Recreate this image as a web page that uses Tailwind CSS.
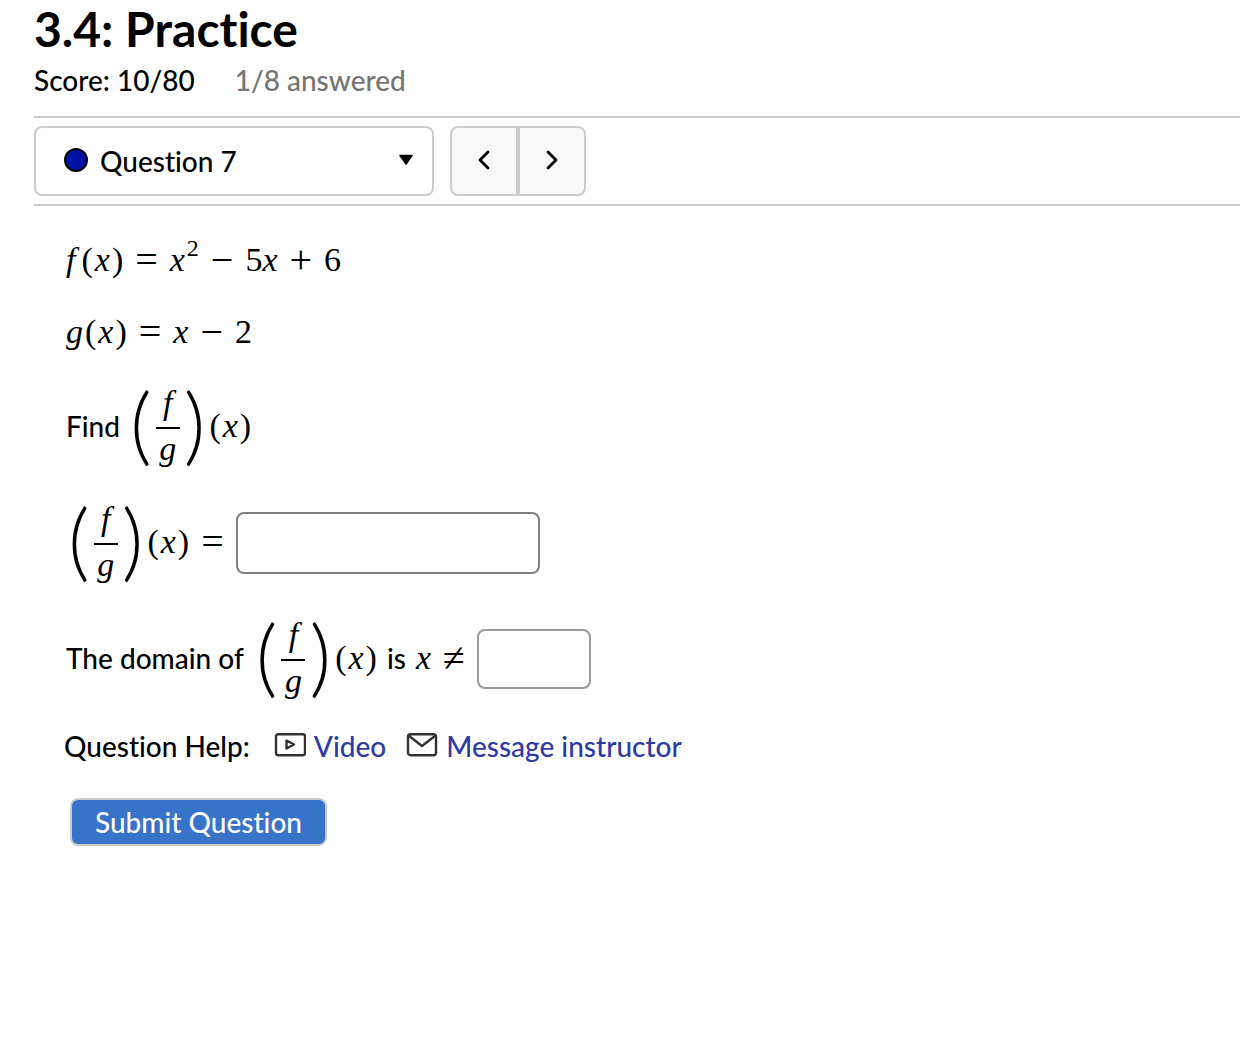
<!DOCTYPE html>
<html lang="en">
  <head>
    <meta charset="UTF-8" />
    <meta name="viewport" content="width=device-width, initial-scale=1.0" />
    <title>3.4: Practice</title>
    <script src="https://cdn.jsdelivr.net/npm/@tailwindcss/browser@4"></script>
  </head>
  <body
    class="bg-white min-h-screen pl-[34px] text-black text-[28px] leading-8 font-medium font-['Trebuchet_MS',Lato,sans-serif] [font-variant-ligatures:none]"
  >
    <!-- Header -->
    <header class="pt-1">
      <h1 class="text-5xl leading-[50px] font-bold">3.4: Practice</h1>
      <div class="mt-[10px] flex gap-10">
        <span>Score: 10/80</span>
        <span class="text-[#757575]">1/8 answered</span>
      </div>
    </header>

    <!-- Question navigation -->
    <nav class="mt-5 flex gap-4 border-y-2 border-[#ccc] py-2">
      <div class="relative w-[400px] h-[70px]">
        <select
          aria-label="Question"
          class="appearance-none w-full h-full rounded-lg border-2 border-[#ccc] bg-white pl-16"
        >
          <option>Question 7</option>
        </select>
        <span
          class="pointer-events-none absolute inset-0 flex items-center justify-between pb-0.5 pl-[30px] pr-5"
        >
          <svg class="size-6" viewBox="0 0 24 24">
            <circle cx="12" cy="12" r="11" fill="#0012a6" stroke="#000" stroke-width="2" />
          </svg>
          <svg class="w-4 h-3" viewBox="0 0 16 12">
            <path d="M2 1.500h12L8 10z" stroke="#000" stroke-width="1.500" stroke-linejoin="round" />
          </svg>
        </span>
      </div>
      <div class="flex">
        <button
          type="button"
          aria-label="Previous question"
          class="flex h-[70px] w-[68px] items-center justify-center rounded-l-lg border-2 border-[#ccc] bg-[#f8f8f8]"
        >
          <svg class="size-6" viewBox="0 0 24 24" fill="none" stroke="#000" stroke-width="2.800" stroke-linecap="round" stroke-linejoin="round">
            <path d="M16 3L8 11l8 8" />
          </svg>
        </button>
        <button
          type="button"
          aria-label="Next question"
          class="flex h-[70px] w-[68px] items-center justify-center rounded-r-lg border-2 border-[#ccc] bg-[#f8f8f8]"
        >
          <svg class="size-6" viewBox="0 0 24 24" fill="none" stroke="#000" stroke-width="2.800" stroke-linecap="round" stroke-linejoin="round">
            <path d="M8 3l8 8-8 8" />
          </svg>
        </button>
      </div>
    </nav>

    <!-- Question -->
    <main class="pl-8">
      <div class="mt-8 flex h-11 items-center gap-3 font-['Liberation_Serif',serif] text-[34px]">
        <span class="flex gap-0.5"><i class="pr-1">f</i><span>(</span><i>x</i><span>)</span></span>
        <span class="text-[40px]">=</span>
        <span class="flex gap-0.5"><i>x</i><sup class="-top-3 text-2xl leading-8">2</sup></span>
        <span class="text-[40px]">−</span>
        <span>5<i>x</i></span>
        <span class="text-[40px]">+</span>
        <span>6</span>
      </div>

      <div class="mt-7 flex h-11 items-center gap-3 font-['Liberation_Serif',serif] text-[34px]">
        <span class="flex gap-0.5"><i>g</i><span>(</span><i>x</i><span>)</span></span>
        <span class="text-[40px]">=</span>
        <i>x</i>
        <span class="text-[40px]">−</span>
        <span>2</span>
      </div>

      <div class="mt-7 flex h-[88px] items-center gap-2">
        <span>Find</span>
        <span class="flex items-center gap-1 pl-0.5 font-['Liberation_Serif',serif] text-[34px]">
          <span class="pb-1.5 font-[Lato] font-light text-[84px] leading-[88px]">(</span>
          <span class="flex w-6 flex-col text-center italic">
            <span class="border-b-2 border-black pb-2">f</span>
            <span class="pt-1">g</span>
          </span>
          <span class="pb-1.5 font-[Lato] font-light text-[84px] leading-[88px]">)</span>
          <span class="flex gap-0.5"><span>(</span><i>x</i><span>)</span></span>
        </span>
      </div>

      <div class="mt-7 flex h-[88px] items-center gap-3">
        <label for="quotient" class="flex items-center gap-3 font-['Liberation_Serif',serif] text-[34px]">
          <span class="flex items-center gap-1 pl-0.5">
            <span class="pb-1.5 font-[Lato] font-light text-[84px] leading-[88px]">(</span>
            <span class="flex w-6 flex-col text-center italic">
              <span class="border-b-2 border-black pb-2">f</span>
              <span class="pt-1">g</span>
            </span>
            <span class="pb-1.5 font-[Lato] font-light text-[84px] leading-[88px]">)</span>
            <span class="flex gap-0.5"><span>(</span><i>x</i><span>)</span></span>
          </span>
          <span class="text-[40px]">=</span>
        </label>
        <input
          id="quotient"
          type="text"
          class="mt-0.5 h-[62px] w-[304px] rounded-lg border-2 border-[#808080] px-3"
        />
      </div>

      <div class="mt-7 flex h-[88px] items-center gap-3">
        <label for="excluded" class="flex items-center gap-2.5">
          <span>The domain of</span>
          <span class="flex items-center gap-1 pl-0.5 font-['Liberation_Serif',serif] text-[34px]">
            <span class="pb-1.5 font-[Lato] font-light text-[84px] leading-[88px]">(</span>
            <span class="flex w-6 flex-col text-center italic">
              <span class="border-b-2 border-black pb-2">f</span>
              <span class="pt-1">g</span>
            </span>
            <span class="pb-1.5 font-[Lato] font-light text-[84px] leading-[88px]">)</span>
            <span class="flex gap-0.5"><span>(</span><i>x</i><span>)</span></span>
          </span>
          <span>is</span>
          <span class="flex items-center gap-3 font-['Liberation_Serif',serif] text-[34px]">
            <i>x</i><span class="text-[40px]">≠</span>
          </span>
        </label>
        <input
          id="excluded"
          type="text"
          class="mt-0.5 h-[60px] w-[114px] rounded-lg border-2 border-[#999] px-3"
        />
      </div>
    </main>

    <!-- Help links -->
    <footer class="pl-[30px]">
      <div class="mt-7 flex items-center">
        <span>Question Help:</span>
        <a href="#" class="ml-6 flex items-center gap-2 text-[#2f3ba5]">
          <svg class="w-8 h-[26px] pb-0.5" viewBox="0 0 32 24" fill="none" stroke="#333" stroke-width="2.400" stroke-linejoin="round">
            <rect x="2" y="1.200" width="29" height="21" rx="2" />
            <path d="M12.500 7.500v8l7.500-4z" />
          </svg>
          Video
        </a>
        <a href="#" class="ml-5 flex items-center gap-2 text-[#2f3ba5]">
          <svg class="w-8 h-[26px] pb-0.5" viewBox="0 0 32 24" fill="none" stroke="#333" stroke-width="2.400" stroke-linejoin="round">
            <rect x="2" y="1.200" width="28" height="21" rx="2.500" />
            <path d="M2.500 2.500L16 13l13.500-10.500" />
          </svg>
          Message instructor
        </a>
      </div>
      <button
        type="button"
        class="mt-9 ml-[6px] h-12 w-[257px] rounded-lg border-2 border-[#ccc] bg-[#3673c9] text-white hover:bg-[#2c60aa]"
      >
        Submit Question
      </button>
    </footer>
  </body>
</html>
